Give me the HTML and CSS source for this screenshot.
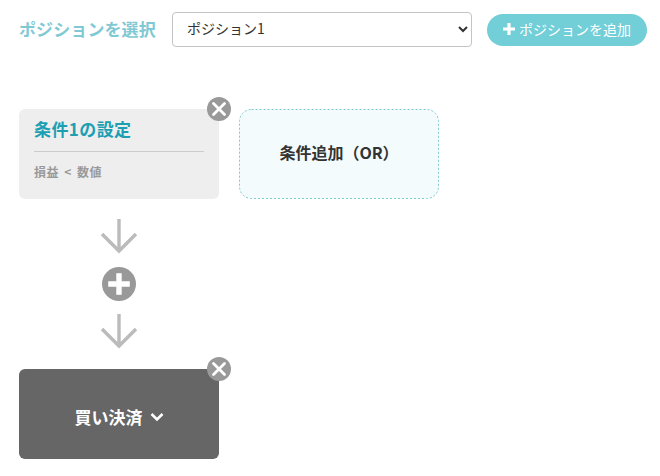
FILE: index.html
```html
<!DOCTYPE html>
<html lang="ja">
<head>
<meta charset="utf-8">
<title>ポジションを選択</title>
<link rel="stylesheet" href="styles.css">
</head>
<body>
<div class="page">
  <div class="toolbar">
    <label class="toolbar-label" for="pos">ポジションを選択</label>
    <select class="pos-select" id="pos"><option>ポジション1</option></select>
    <button class="add-btn" type="button">
      <svg class="add-icon" viewBox="0 0 12 12" width="12" height="12"><path d="M4.4 0h3.2v4.4H12v3.2H7.6V12H4.4V7.6H0V4.4h4.4z" fill="#fff"/></svg>
      <span>ポジションを追加</span>
    </button>
  </div>
  <div class="cond-row">
    <div class="card cond-card">
      <div class="cond-title">条件1の設定</div>
      <div class="cond-desc">損益 &lt; 数値</div>
      <span class="close"><svg viewBox="0 0 24 24" width="24" height="24"><path d="M6.5 6.5l11 11M17.5 6.5l-11 11" stroke="#fff" stroke-width="2.8" stroke-linecap="round"/></svg></span>
    </div>
    <div class="card or-card">
      <svg class="or-border" viewBox="0 0 200 90" width="200" height="90"><rect x="0.5" y="0.5" width="199" height="89" rx="12" fill="none" stroke="#7fc9d1" stroke-dasharray="2 2"/></svg>
      <span class="card-text">条件追加（OR）</span>
    </div>
  </div>
  <div class="flow">
    <svg class="arrow" viewBox="0 0 38 36" width="38" height="36"><path d="M19 1v32M2 16l17 17 17-17" fill="none" stroke="#bbb" stroke-width="3.4"/></svg>
    <svg class="plus" viewBox="0 0 34 34" width="34" height="34"><circle cx="17" cy="17" r="17" fill="#999"/><path d="M14.6 6.5h4.8v8.1h8.1v4.8h-8.100v8.100h-4.800v-8.100H6.500v-4.800h8.100z" fill="#fff" stroke="#fff" stroke-width="0.6" stroke-linejoin="round"/></svg>
    <svg class="arrow" viewBox="0 0 38 36" width="38" height="36"><path d="M19 1v32M2 16l17 17 17-17" fill="none" stroke="#bbb" stroke-width="3.4"/></svg>
  </div>
  <div class="card action-card">
    <span class="action-text">買い決済</span>
    <svg class="chevron" viewBox="0 0 14 10" width="14" height="10"><path d="M1.500 2l5.500 5.500L12.500 2" fill="none" stroke="#fff" stroke-width="2.600"/></svg>
    <span class="close"><svg viewBox="0 0 24 24" width="24" height="24"><path d="M6.5 6.5l11 11M17.5 6.5l-11 11" stroke="#fff" stroke-width="2.8" stroke-linecap="round"/></svg></span>
  </div>
</div>
</body>
</html>
```
FILE: styles.css
```css
html, body { margin: 0; padding: 0; background: #fff; }
body { font-family: "Noto Sans CJK JP", "Noto Sans", sans-serif; color: #333; }
.page { padding: 12px 0 0 19px; box-sizing: border-box; }
.toolbar { display: flex; align-items: center; height: 35px; }
.toolbar-label { flex: none; width: 153px; padding-bottom: 2px; font-size: 17px; font-weight: 700; letter-spacing: 0.1px; color: #7fc9d4; white-space: nowrap; }
.pos-select { flex: none; width: 300px; height: 35px; padding: 0 10px 4px 10px; font-family: inherit; font-size: 14px; color: #333; background: #fff; border: 1px solid #c4c4c4; border-radius: 4px; }
.add-btn { flex: none; display: flex; align-items: center; justify-content: center; gap: 4px; width: 160px; height: 32px; margin-left: 15px; padding: 0 0 2px; border: 0; border-radius: 16px; background: #72ced7; color: #fff; font-family: inherit; font-size: 14px; }
.add-icon { flex: none; }
.cond-row { display: flex; gap: 20px; margin-top: 62px; }
.card { position: relative; box-sizing: border-box; width: 200px; height: 90px; border-radius: 6px; }
.cond-card { background: #eee; padding: 10px 15px 0; }
.cond-title { height: 32px; border-bottom: 1px solid #ccc; font-size: 17px; line-height: 19px; font-weight: 700; letter-spacing: 0.4px; color: #1d9fb3; }
.cond-desc { margin-top: 11px; font-size: 12px; line-height: 18px; font-weight: 700; letter-spacing: 0.5px; word-spacing: 2px; color: #999; }
.close { position: absolute; top: -12px; right: -12px; display: block; width: 24px; height: 24px; border-radius: 50%; background: #999; }
.close svg { display: block; }
.or-card { display: flex; align-items: center; justify-content: center; background: #f3fbfd; border-radius: 12px; font-size: 16px; font-weight: 700; color: #333; }
.or-border { position: absolute; top: 0; left: 0; }
.card-text { padding-bottom: 5px; }
.flow { display: flex; flex-direction: column; align-items: center; width: 200px; margin-top: 19px; }
.arrow { display: block; }
.plus { display: block; margin: 13px 0 12px; }
.action-card { display: flex; align-items: center; justify-content: center; gap: 7px; margin-top: 20px; background: #666; color: #fff; font-size: 17px; font-weight: 700; }
.action-text { padding-top: 4px; }
.chevron { margin-top: 5px; }
```
